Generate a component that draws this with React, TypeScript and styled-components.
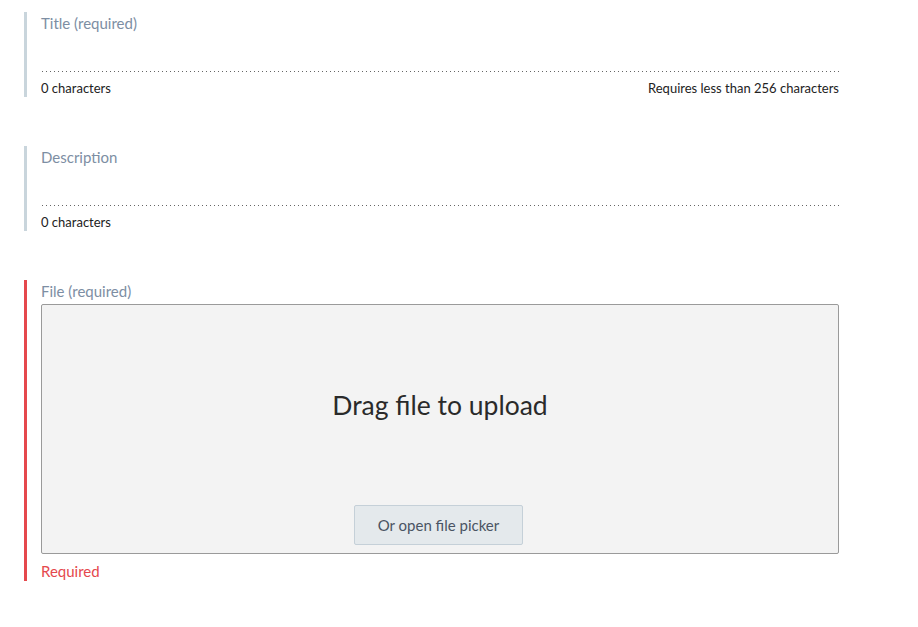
import styled, { createGlobalStyle } from "styled-components";

const Global = createGlobalStyle`
  body {
    margin: 0;
    background: #fff;
    font-family: Lato, "Open Sans", "Liberation Sans", sans-serif;
    color: #333;
  }
`;

const Page = styled.div`
  padding: 12px 0 0 24px;
  width: 815px;
  display: flex;
  flex-direction: column;
  gap: 49px;
`;

const Field = styled.div<{ $error?: boolean }>`
  border-left: 3px solid ${(p) => (p.$error ? "#e5484d" : "#c9d5dc")};
  padding-left: 14px;
  display: flex;
  flex-direction: column;
`;

const Label = styled.label`
  font-size: 15px;
  line-height: 22px;
  color: #7d8ea3;
`;

const Input = styled.div`
  height: 38px;
  background-image: linear-gradient(to right, #666 1px, transparent 1px);
  background-size: 4px 1px;
  background-repeat: repeat-x;
  background-position: 1px bottom;
`;

const Counter = styled.div`
  display: flex;
  justify-content: space-between;
  font-size: 13px;
  line-height: 17px;
  padding: 8px 0 0;
  color: #222;
`;

const DropZone = styled.div`
  margin-top: 2px;
  height: 248px;
  border: 1px solid #9a9a9a;
  border-radius: 2px;
  background: #f3f3f3;
  display: flex;
  flex-direction: column;
  align-items: center;
`;

const DropText = styled.div`
  margin-top: 84px;
  font-size: 26.5px;
  line-height: 32px;
  color: #2a2a2a;
`;

const PickButton = styled.button`
  margin: 84px 3px 0 0;
  width: 169px;
  height: 40px;
  border: 1px solid #c5d0d8;
  border-radius: 2px;
  background: #e4e9ec;
  font-family: inherit;
  font-size: 15px;
  color: #4a5463;
`;

const ErrorText = styled.div`
  margin-top: 8px;
  font-size: 15px;
  line-height: 19px;
  color: #e5484d;
`;

export default function App() {
  return (
    <>
      <Global />
      <Page>
        <Field>
          <Label>Title (required)</Label>
          <Input />
          <Counter>
            <span>0 characters</span>
            <span>Requires less than 256 characters</span>
          </Counter>
        </Field>
        <Field>
          <Label>Description</Label>
          <Input />
          <Counter>
            <span>0 characters</span>
          </Counter>
        </Field>
        <Field $error>
          <Label>File (required)</Label>
          <DropZone>
            <DropText>Drag file to upload</DropText>
            <PickButton>Or open file picker</PickButton>
          </DropZone>
          <ErrorText>Required</ErrorText>
        </Field>
      </Page>
    </>
  );
}
